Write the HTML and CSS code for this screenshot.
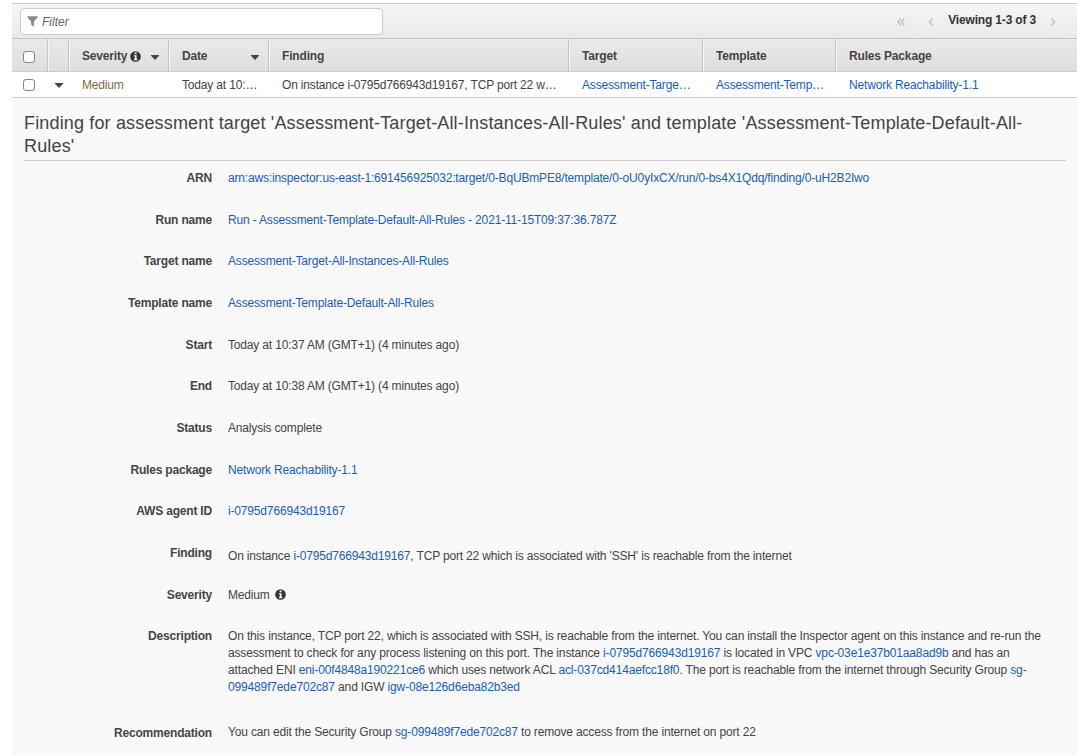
FILE: index.html
```html
<!DOCTYPE html>
<html lang="en">
<head>
<meta charset="utf-8">
<title>Findings</title>
<link rel="stylesheet" href="styles.css">
</head>
<body>
<svg class="defs" width="0" height="0">
  <symbol id="info" viewBox="0 0 11 11"><circle cx="5.5" cy="5.5" r="5.3" fill="#333"/><path d="M4.6 1.6h2v1.6h-2zM3.9 4.2h2.7v3.9h.8v1.1H3.8V8.1h.9V5.3h-.8z" fill="#f4f4f4"/></symbol>
</svg>
<main class="panel">
  <div class="toolbar">
    <div class="filter">
      <svg class="funnel" width="11" height="11" viewBox="0 0 11 11"><path d="M.3.3h10.4v1L6.9 5.4v5.3L4.1 8.4v-3L.3 1.3z" fill="#888"/></svg>
      <span>Filter</span>
    </div>
    <div class="pager">
      <span class="page-btn"><svg width="8" height="8" viewBox="0 0 8 8"><path d="M3.8.7.9 4l2.9 3.3M7.3.7 4.4 4l2.9 3.3"/></svg></span>
      <span class="page-btn"><svg width="8" height="8" viewBox="0 0 8 8"><path d="M5.6.5 2.3 4l3.3 3.5"/></svg></span>
      <b class="viewing">Viewing 1-3 of 3</b>
      <span class="page-btn"><svg width="8" height="8" viewBox="0 0 8 8"><path d="M2.4.5 5.7 4 2.4 7.5"/></svg></span>
      <span class="page-btn last"></span>
    </div>
  </div>
  <div class="grid head">
    <div class="check"><i class="box"></i></div>
    <div></div>
    <div class="cell">Severity <svg class="info" width="11" height="11"><use href="#info"/></svg><i class="caret"></i></div>
    <div class="cell">Date<i class="caret"></i></div>
    <div class="cell">Finding</div>
    <div class="cell">Target</div>
    <div class="cell">Template</div>
    <div class="cell">Rules Package</div>
  </div>
  <div class="grid row">
    <div class="check"><i class="box"></i></div>
    <div class="toggle"><i class="caret"></i></div>
    <div class="cell medium">Medium</div>
    <div class="cell">Today at 10:…</div>
    <div class="cell">On instance i-0795d766943d19167, TCP port 22 w…</div>
    <div class="cell"><a>Assessment-Targe…</a></div>
    <div class="cell"><a>Assessment-Temp…</a></div>
    <div class="cell"><a>Network Reachability-1.1</a></div>
  </div>
  <section class="detail">
    <h2>Finding for assessment target 'Assessment-Target-All-Instances-All-Rules' and template 'Assessment-Template-Default-All-Rules'</h2>
    <dl>
      <dt>ARN</dt><dd><a>arn:aws:inspector:us-east-1:691456925032:target/0-BqUBmPE8/template/0-oU0yIxCX/run/0-bs4X1Qdq/finding/0-uH2B2Iwo</a></dd>
      <dt>Run name</dt><dd><a>Run - Assessment-Template-Default-All-Rules - 2021-11-15T09:37:36.787Z</a></dd>
      <dt>Target name</dt><dd><a>Assessment-Target-All-Instances-All-Rules</a></dd>
      <dt>Template name</dt><dd><a>Assessment-Template-Default-All-Rules</a></dd>
      <dt>Start</dt><dd>Today at 10:37 AM (GMT+1) (4 minutes ago)</dd>
      <dt>End</dt><dd>Today at 10:38 AM (GMT+1) (4 minutes ago)</dd>
      <dt>Status</dt><dd>Analysis complete</dd>
      <dt>Rules package</dt><dd><a>Network Reachability-1.1</a></dd>
      <dt>AWS agent ID</dt><dd><a>i-0795d766943d19167</a></dd>
      <dt>Finding</dt><dd class="lowered">On instance <a>i-0795d766943d19167</a>, TCP port 22 which is associated with 'SSH' is reachable from the internet</dd>
      <dt>Severity</dt><dd>Medium <svg class="info spaced" width="11" height="11"><use href="#info"/></svg></dd>
      <dt>Description</dt><dd class="prose">On this instance, TCP port 22, which is associated with SSH, is reachable from the internet. You can install the Inspector agent on this instance and re-run the assessment to check for any process listening on this port. The instance <a>i-0795d766943d19167</a> is located in VPC <a>vpc-03e1e37b01aa8ad9b</a> and has an attached ENI <a>eni-00f4848a190221ce6</a> which uses network ACL <a>acl-037cd414aefcc18f0</a>. The port is reachable from the internet through Security Group <a>sg-099489f7ede702c87</a> and IGW <a>igw-08e126d6eba82b3ed</a></dd>
      <dt class="label-low">Recommendation</dt><dd>You can edit the Security Group <a>sg-099489f7ede702c87</a> to remove access from the internet on port 22</dd>
    </dl>
  </section>
</main>
</body>
</html>
```
FILE: styles.css
```css
* { box-sizing: border-box; }
body {
  margin: 0;
  height: 755px;
  overflow: hidden;
  background: #fff;
  color: #444;
  font: 12px/17px "Liberation Sans", Arial, sans-serif;
  letter-spacing: -0.166px;
}
.defs { display: block; }
a { color: #1660b6; }
.panel { margin: 3px 0 0 12px; }

.toolbar {
  display: flex;
  justify-content: space-between;
  height: 35px;
  padding-left: 8px;
  border-top: 1px solid #ccc;
  background: linear-gradient(#f6f6f6, #e9e9e9);
  overflow: hidden;
}
.filter {
  display: flex;
  align-items: center;
  gap: 4px;
  width: 363px;
  height: 27px;
  margin-top: 4px;
  padding: 1px 0 0 6px;
  border: 1px solid #c8c8c8;
  border-radius: 4px;
  background: #fff;
  color: #666;
  font-style: italic;
  letter-spacing: 0;
}
.funnel { margin-top: -2px; }
.pager { display: flex; margin-top: 5px; }
.page-btn {
  display: flex;
  align-items: center;
  justify-content: center;
  width: 26px;
  height: 25px;
  padding-top: 1px;
  margin-right: 4px;
  border: 1px solid #efefef;
  border-radius: 3px;
}
.page-btn svg { fill: none; stroke: #bbb; stroke-width: 1.2; }
.viewing { margin: 3px 4px 0 0; color: #333; white-space: nowrap; }
.page-btn.last { width: 7px; margin-right: 0; border-right: 0; border-radius: 3px 0 0 3px; }

.grid {
  display: grid;
  grid-template-columns: 35px 21px 100px 100px 300px 134px 133px 1fr;
}
.grid > div { display: flex; align-items: center; white-space: nowrap; }
.head {
  height: 34px;
  border-top: 1px solid #c6c6c6;
  border-bottom: 1px solid #ccc;
  background: linear-gradient(#eaeaea, #dedede);
  font-weight: bold;
}
.head > div + div { border-left: 1px solid #c4c4c4; box-shadow: inset 1px 0 #f6f6f6; }
.head .cell { padding: 2px 9px 0 13px; }
.head .caret { margin: 3px 0 0 auto; }
.row { height: 26px; border-bottom: 1px solid #ccc; background: #fff; }
.row .cell { padding: 2px 0 0 14px; }
.row .medium { color: #836848; }
.grid .check { padding: 3px 0 0 11px; }
.row .check { padding-top: 1px; }
.row .toggle { padding: 2px 0 0 8px; }
.box {
  width: 12px;
  height: 12px;
  border: 1px solid #858585;
  border-radius: 3px;
  background: #fff;
}
.caret {
  width: 8px;
  height: 5px;
  background: #444;
  clip-path: polygon(0 0, 100% 0, 100% 15%, 50% 100%, 0 15%);
}
.info { margin-left: 3px; }

.detail { height: 660px; padding: 14px 11px 0 12px; background: #f9f9f9; }
h2 {
  margin: 0;
  padding-bottom: 2px;
  border-bottom: 1px solid #ccc;
  font-size: 18px;
  font-weight: normal;
  letter-spacing: 0.157px;
  line-height: 23px;
}
dl {
  display: grid;
  grid-template-columns: 188px 815px;
  grid-template-rows: repeat(11, 41.67px) 95.6px 40px;
  column-gap: 16px;
  margin: 9px 0 0;
}
dt { font-weight: bold; text-align: right; letter-spacing: -0.19px; }
dd { margin: 0; }
.prose { letter-spacing: -0.15px; }
.lowered { padding-top: 3px; }
.label-low { padding-top: 1px; }
.info.spaced { margin-left: 2px; vertical-align: -1px; }
```
